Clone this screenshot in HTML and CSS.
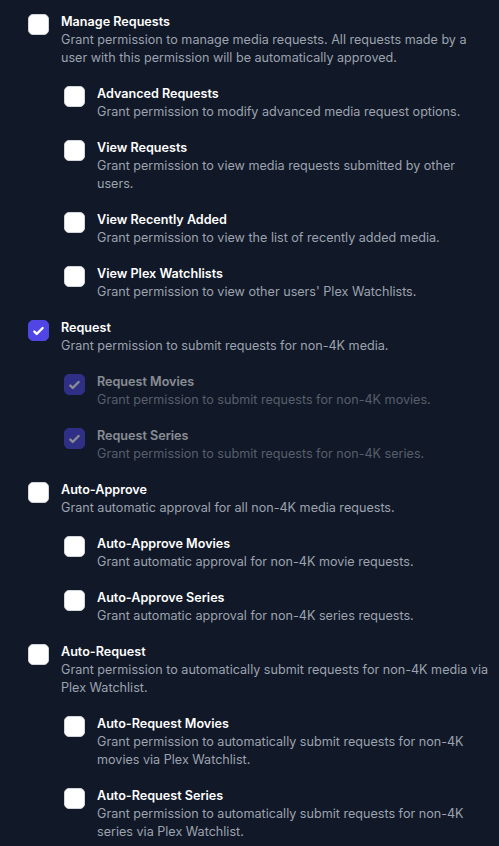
FILE: index.html
```html
<!DOCTYPE html>
<html lang="en">
<head>
<meta charset="utf-8">
<title>Permissions</title>
<link rel="stylesheet" href="styles.css">
</head>
<body>
<div class="perms">

  <div class="item">
    <div class="row">
      <span class="box"></span>
      <div class="text">
        <div class="title">Manage Requests</div>
        <div class="desc">Grant permission to manage media requests. All requests made by a user with this permission will be automatically approved.</div>
      </div>
    </div>
    <div class="children">
      <div class="row">
        <span class="box"></span>
        <div class="text">
          <div class="title">Advanced Requests</div>
          <div class="desc">Grant permission to modify advanced media request options.</div>
        </div>
      </div>
      <div class="row">
        <span class="box"></span>
        <div class="text">
          <div class="title">View Requests</div>
          <div class="desc">Grant permission to view media requests submitted by other users.</div>
        </div>
      </div>
      <div class="row">
        <span class="box"></span>
        <div class="text">
          <div class="title">View Recently Added</div>
          <div class="desc">Grant permission to view the list of recently added media.</div>
        </div>
      </div>
      <div class="row">
        <span class="box"></span>
        <div class="text">
          <div class="title">View Plex Watchlists</div>
          <div class="desc">Grant permission to view other users' Plex Watchlists.</div>
        </div>
      </div>
    </div>
  </div>

  <div class="item">
    <div class="row">
      <span class="box checked"><svg viewBox="0 0 16 16"><path d="M12.207 4.793a1 1 0 010 1.414l-5 5a1 1 0 01-1.414 0l-2-2a1 1 0 011.414-1.414L6.5 9.086l4.293-4.293a1 1 0 011.414 0z"/></svg></span>
      <div class="text">
        <div class="title">Request</div>
        <div class="desc">Grant permission to submit requests for non-4K media.</div>
      </div>
    </div>
    <div class="children">
      <div class="row disabled">
        <span class="box checked"><svg viewBox="0 0 16 16"><path d="M12.207 4.793a1 1 0 010 1.414l-5 5a1 1 0 01-1.414 0l-2-2a1 1 0 011.414-1.414L6.5 9.086l4.293-4.293a1 1 0 011.414 0z"/></svg></span>
        <div class="text">
          <div class="title">Request Movies</div>
          <div class="desc">Grant permission to submit requests for non-4K movies.</div>
        </div>
      </div>
      <div class="row disabled">
        <span class="box checked"><svg viewBox="0 0 16 16"><path d="M12.207 4.793a1 1 0 010 1.414l-5 5a1 1 0 01-1.414 0l-2-2a1 1 0 011.414-1.414L6.5 9.086l4.293-4.293a1 1 0 011.414 0z"/></svg></span>
        <div class="text">
          <div class="title">Request Series</div>
          <div class="desc">Grant permission to submit requests for non-4K series.</div>
        </div>
      </div>
    </div>
  </div>

  <div class="item">
    <div class="row">
      <span class="box"></span>
      <div class="text">
        <div class="title">Auto-Approve</div>
        <div class="desc">Grant automatic approval for all non-4K media requests.</div>
      </div>
    </div>
    <div class="children">
      <div class="row">
        <span class="box"></span>
        <div class="text">
          <div class="title">Auto-Approve Movies</div>
          <div class="desc">Grant automatic approval for non-4K movie requests.</div>
        </div>
      </div>
      <div class="row">
        <span class="box"></span>
        <div class="text">
          <div class="title">Auto-Approve Series</div>
          <div class="desc">Grant automatic approval for non-4K series requests.</div>
        </div>
      </div>
    </div>
  </div>

  <div class="item">
    <div class="row">
      <span class="box"></span>
      <div class="text">
        <div class="title">Auto-Request</div>
        <div class="desc">Grant permission to automatically submit requests for non-4K media via Plex Watchlist.</div>
      </div>
    </div>
    <div class="children">
      <div class="row">
        <span class="box"></span>
        <div class="text">
          <div class="title">Auto-Request Movies</div>
          <div class="desc">Grant permission to automatically submit requests for non-4K movies via Plex Watchlist.</div>
        </div>
      </div>
      <div class="row">
        <span class="box"></span>
        <div class="text">
          <div class="title">Auto-Request Series</div>
          <div class="desc">Grant permission to automatically submit requests for non-4K series via Plex Watchlist.</div>
        </div>
      </div>
    </div>
  </div>

</div>
</body>
</html>
```

FILE: styles.css
```css
html, body {
  margin: 0;
  padding: 0;
  background: #111827;
  height: 100%;
}

body {
  font-family: Inter, "Noto Sans", sans-serif;
  font-size: 12.6px;
  line-height: 18px;
  color: #ffffff;
  overflow: hidden;
}

.perms {
  padding: 13px 8px 0 28px;
  display: flex;
  flex-direction: column;
  gap: 18px;
}

.item {
  display: flex;
  flex-direction: column;
  gap: 18px;
}

.children {
  padding-left: 36px;
  display: flex;
  flex-direction: column;
  gap: 18px;
}

.row {
  display: flex;
  align-items: flex-start;
}

.box {
  flex: none;
  width: 21px;
  height: 21px;
  margin-top: 1px;
  box-sizing: border-box;
  border-radius: 5px;
  background: #ffffff;
  border: 1px solid #d1d5db;
  display: flex;
  align-items: center;
  justify-content: center;
}

.box.checked {
  background: #4f46e5;
  border-color: #4f46e5;
}

.box svg {
  width: 22px;
  height: 22px;
  fill: #ffffff;
}

.text {
  margin-left: 12px;
  min-width: 0;
}

.title {
  font-weight: 600;
  color: #ffffff;
}

.desc {
  color: #9ca3af;
}

.row.disabled {
  opacity: 0.5;
}
```
